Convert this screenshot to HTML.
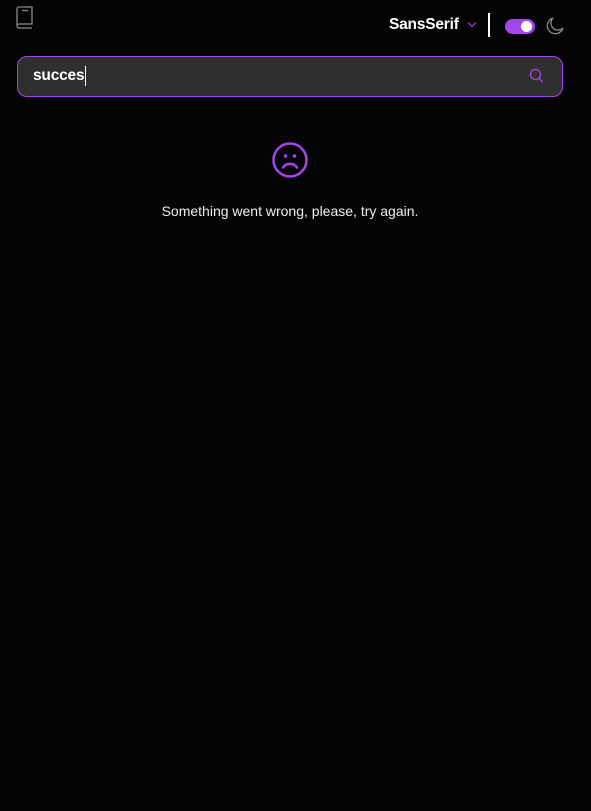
<!DOCTYPE html>
<html><head><meta charset="utf-8"><style>
html,body{margin:0;padding:0;background:#050505;width:591px;height:811px;overflow:hidden;font-family:"Liberation Sans",sans-serif;}
.abs{position:absolute}
</style></head><body>
<svg class="abs" style="left:15px;top:6px" width="20" height="23" viewBox="0 0 20 23" fill="none" stroke="#8a8a8a" stroke-width="1.3">
<path d="M2 19V3a2 2 0 0 1 2-2h13v17H4a2 2 0 0 0-2 2a2 2 0 0 0 2 2h13"/><path d="M7 4.5h6"/>
</svg>
<div class="abs" style="left:389px;top:16px;color:#fff;font-weight:bold;font-size:15.5px;letter-spacing:-0.2px">SansSerif</div>
<svg class="abs" style="left:467px;top:21px" width="10" height="7" viewBox="0 0 10 7" fill="none" stroke="#a445ed" stroke-width="1.2"><path d="M1 1.5l4 4 4-4"/></svg>
<div class="abs" style="left:488px;top:13px;width:1.5px;height:24px;background:#fff"></div>
<div class="abs" style="left:505px;top:19px;width:30px;height:15px;border-radius:8px;background:#a445ed"></div>
<div class="abs" style="left:521px;top:21px;width:11px;height:11px;border-radius:50%;background:#fff"></div>
<svg class="abs" style="left:545px;top:16px" width="20" height="20" viewBox="0 0 20 20" fill="none" stroke="#8a8a8a" stroke-width="1.3"><path d="M8 2a8 8 0 1 0 10 10A7 7 0 0 1 8 2z"/></svg>
<div class="abs" style="left:17px;top:56px;width:544px;height:39px;border:1px solid #a445ed;border-radius:10px;background:#2f2f2f"></div>
<div class="abs" style="left:33px;top:67px;color:#fff;font-weight:bold;font-size:15.5px;letter-spacing:-0.2px">succes</div>
<div class="abs" style="left:85px;top:66px;width:1px;height:20px;background:#fff"></div>
<svg class="abs" style="left:529px;top:68px" width="15" height="16" viewBox="0 0 15 16" fill="none" stroke="#a445ed" stroke-width="1.3"><circle cx="6.5" cy="6.5" r="5"/><path d="M10 10.5l3.5 3.5"/></svg>
<svg class="abs" style="left:271px;top:141px" width="38" height="38" viewBox="0 0 38 38" fill="none" stroke="#a445ed" stroke-width="2.5">
<circle cx="19" cy="19" r="16.5"/><path d="M12 26.5a8.5 8.5 0 0 1 14 0" stroke-linecap="round"/>
<circle cx="14.5" cy="15" r="1.8" fill="#a445ed" stroke="none"/><circle cx="23.5" cy="15" r="1.8" fill="#a445ed" stroke="none"/>
</svg>
<div class="abs" style="left:0;width:580px;top:203px;text-align:center;color:#eee;font-size:14px;">Something went wrong, please, try again.</div>
</body></html>
